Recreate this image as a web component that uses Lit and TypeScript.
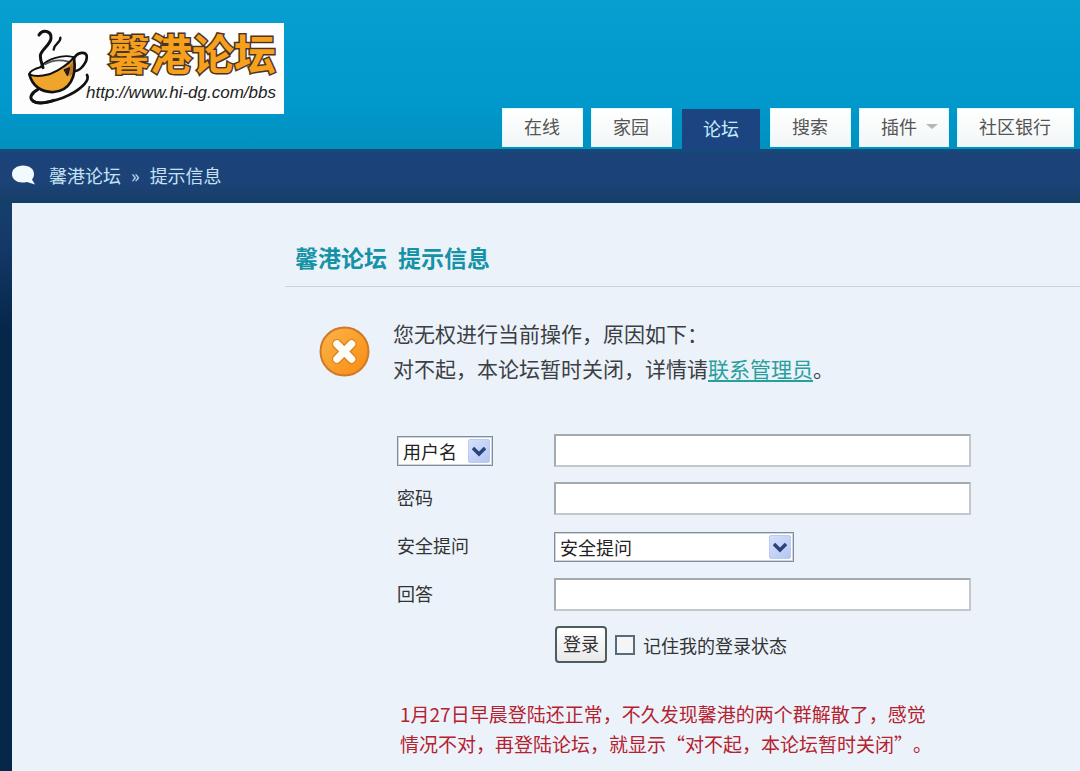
import { LitElement, html, css, svg } from "lit";
import { customElement, property } from "lit/decorators.js";

const chevron = svg`<path d="M1 2.500 L7 8.500 L13 2.500" fill="none" stroke="#2d4378" stroke-width="3.400"/>`;

@customElement("site-header")
class SiteHeader extends LitElement {
  static styles = css`
    :host { display: block; }
    .head {
      display: flex; justify-content: space-between; align-items: flex-end;
      min-height: 126px; padding: 23px 6px 0 12px;
      background: linear-gradient(#069fd0, #0198cb 70%, #0190bf);
    }
    .logo {
      align-self: flex-start; display: flex; justify-content: space-between; align-items: flex-start;
      box-sizing: border-box; width: 272px; height: 91px; background: #fdfdfd;
      text-decoration: none; color: #222; padding: 4px 8px 0 15px;
    }
    .cup { flex: none; width: 62px; height: 80px; }
    .words { display: flex; flex-direction: column; align-items: flex-end; margin-left: -6px; white-space: nowrap; }
    .name {
      font: 700 42px/50px "Noto Sans CJK SC", sans-serif; color: #f6a01c;
      -webkit-text-stroke: 3px #4a3524; paint-order: stroke fill;
    }
    .url { font: italic 17px/32px "Liberation Sans", sans-serif; }
    .tabs { display: flex; gap: 8px; align-items: flex-end; padding-bottom: 2px; }
    .tab {
      display: flex; align-items: center; gap: 9px; box-sizing: border-box;
      height: 39px; padding: 0 22px 3px 21px; font-size: 18px; line-height: 24px; white-space: nowrap;
      color: #555; text-decoration: none; background: linear-gradient(#fff, #f2f6f7);
      border: 1px solid #d8fbff;
    }
    .menu { padding-right: 10px; }
    .caret { width: 12px; height: 5px; }
    .current {
      margin: 0 2px -2px; height: 40px; padding: 0 20px 3px;
      color: #cdebff; background: #1b4480; border-color: #1b4480;
    }
    .crumbs {
      display: flex; align-items: center; gap: 13px; box-sizing: border-box; height: 54px; padding: 0 0 3px 12px;
      font-size: 18px; color: #c5e2f5; background: linear-gradient(#0f4e78, #1c4379 8%, #1c4278 60%, #163f66);
    }
    .crumbs a { color: inherit; text-decoration: none; }
    .bubble { width: 24px; height: 20px; }
    .trail { display: flex; gap: 10px; }
  `;
  render() {
    return html`
      <header class="head">
        <a class="logo" href="#">
          <svg class="cup" viewBox="50 20 186 240" aria-hidden="true">
            <g fill="none" stroke="#111" stroke-linecap="round" stroke-linejoin="round">
              <path d="M57 162 C66 196 92 216 130 216 C176 212 202 176 190 110 C176 132 140 160 100 166 C80 168 64 168 57 162Z" fill="#efa42c" stroke="none"/>
              <path d="M192 112 C188 128 176 138 162 148 L180 168 C190 156 196 130 192 112Z" fill="#b9772a" stroke="none"/>
              <path d="M56 160 C72 130 140 98 190 110 C180 132 142 160 100 165 C80 168 62 168 56 160Z" fill="#fdfdfd" stroke="none"/>
              <path d="M92 138 C112 116 156 102 188 110" stroke-width="5"/>
              <path d="M104 132 C128 118 152 118 174 124" stroke="#555" stroke-width="5"/>
              <path d="M92 140 C70 146 58 152 57 162 C80 172 116 166 142 150 C166 136 184 124 190 110" stroke-width="6"/>
              <path d="M57 162 C66 196 92 217 130 215 C178 211 200 170 191 112" stroke-width="8"/>
              <path d="M162 148 L178 142 L172 166Z" fill="#331b12" stroke-width="3"/>
              <path d="M192 112 C204 94 226 94 229 106 C232 124 212 150 196 152" stroke-width="8"/>
              <path d="M230 164 C240 182 206 214 158 232 C118 246 76 254 66 240" stroke-width="8"/>
              <path d="M82 208 C62 218 56 234 68 242 C80 252 106 248 130 240" stroke-width="9"/>
              <path d="M86 44 C96 26 124 30 122 54 C120 74 92 88 90 106 C90 120 94 128 98 142" stroke-width="9"/>
              <path d="M150 52 C152 68 132 68 130 88" stroke-width="7"/>
            </g>
          </svg>
          <span class="words">
            <span class="name">馨港论坛</span>
            <span class="url">http://www.hi-dg.com/bbs</span>
          </span>
        </a>
        <nav class="tabs">
          <a class="tab" href="#">在线</a>
          <a class="tab" href="#">家园</a>
          <a class="tab current" href="#" aria-current="page">论坛</a>
          <a class="tab" href="#">搜索</a>
          <a class="tab menu" href="#">插件
            <svg class="caret" viewBox="0 0 12 5" aria-hidden="true"><path d="M0 0H12L6 5Z" fill="#b3b7b9"/></svg>
          </a>
          <a class="tab" href="#">社区银行</a>
        </nav>
      </header>
      <div class="crumbs">
        <svg class="bubble" viewBox="0 0 24 20" aria-hidden="true">
          <path d="M11 0.500 C17.500 0.500 22 4 22 9 C22 11.500 21 13.500 20 14.500 L23 19.500 L15 17 C6 19 0 15 0 9 C0 4 5 0.500 11 0.500Z" fill="#f2faff"/>
        </svg>
        <div class="trail"><a href="#">馨港论坛</a><span>»</span><span>提示信息</span></div>
      </div>
    `;
  }
}

@customElement("drop-down")
class DropDown extends LitElement {
  @property() label = "";
  @property() name = "";
  @property({ attribute: false }) options: string[] = [];
  static styles = css`
    :host { display: inline-grid; align-items: center; }
    .box {
      grid-area: 1 / 1; appearance: none; box-sizing: border-box; width: 100%; height: 30px;
      margin: 0; padding: 0 30px 0 5px; border: 1px solid #7f8d98; outline: 1px solid #cfd6dd; outline-offset: -2px;
      border-radius: 0; background: #fff; color: #222;
      font: 18px/24px "Noto Sans CJK SC", sans-serif;
    }
    .arrow {
      grid-area: 1 / 1; justify-self: end; pointer-events: none; box-sizing: border-box;
      width: 22px; height: 24px; padding: 3px; margin-right: 3px; border-radius: 2px;
      border: 1px solid #bccbf2; background: linear-gradient(135deg, #d5e0fb, #b4c6f2);
    }
  `;
  render() {
    return html`
      <select class="box" name=${this.name} aria-label=${this.label}>
        ${this.options.map((o) => html`<option>${o}</option>`)}
      </select>
      <svg class="arrow" viewBox="0 0 14 11" aria-hidden="true">${chevron}</svg>
    `;
  }
}

@customElement("login-form")
class LoginForm extends LitElement {
  static styles = css`
    :host { display: block; }
    .form {
      display: grid; grid-template-columns: 157px minmax(0, 417px); row-gap: 15px;
      grid-auto-rows: minmax(33px, auto);
      align-items: center; font-size: 18px; line-height: 24px; color: #333;
    }
    .caption { padding-bottom: 4px; }
    .field {
      box-sizing: border-box; width: 100%; height: 33px; margin: 0; padding: 0 6px;
      border: 2px solid #c2c8cb; border-top-color: #a5abb0; border-left-color: #a5abb0;
      background: #fff; font: inherit; border-radius: 0;
    }
    .kind { width: 96px; }
    .question { width: 240px; }
    .actions { grid-column: 2; display: flex; align-items: center; gap: 8px; padding: 0 0 0 1px; }
    .submit {
      box-sizing: border-box; width: 52px; height: 37px; padding: 0 0 4px; margin: 0;
      border: 2px solid #4d5c5c; border-radius: 4px; background: linear-gradient(#fff, #e9e9ea);
      font: inherit; color: #333;
    }
    .remember { display: flex; align-items: center; gap: 8px; }
    .tick {
      appearance: none; box-sizing: border-box; width: 20px; height: 20px; margin: 0;
      border: 2px solid #5a6b78; background: #f3f5f6;
    }
    .tick:checked { background: #2d4378; }
  `;
  render() {
    return html`
      <form class="form" @submit=${(e: Event) => e.preventDefault()}>
        <drop-down class="kind" label="登录方式" name="kind" .options=${["用户名", "UID"]}></drop-down>
        <input class="field" name="user" aria-label="用户名" />
        <label class="caption" for="password">密码</label>
        <input class="field" id="password" type="password" />
        <span class="caption">安全提问</span>
        <drop-down class="question" label="安全提问" name="question" .options=${["安全提问"]}></drop-down>
        <label class="caption" for="answer">回答</label>
        <input class="field" id="answer" />
        <div class="actions">
          <button class="submit" type="submit">登录</button>
          <label class="remember"><input class="tick" type="checkbox" />记住我的登录状态</label>
        </div>
      </form>
    `;
  }
}

@customElement("app-root")
class AppRoot extends LitElement {
  static styles = css`
    :host {
      display: flex; flex-direction: column; min-height: 100vh;
      font-family: "Noto Sans CJK SC", sans-serif;
      background: linear-gradient(#163f6b 200px, #153a6a 240px, #06274a 330px);
    }
    .page { flex: 1; margin-left: 12px; padding-left: 273px; background: #ecf2fa; }
    .title {
      display: flex; gap: 11px; margin: 0; padding: 39px 10px 13px;
      font-size: 23px; line-height: 31px; color: #1592a6; border-bottom: 1px solid #c9d5da;
    }
    .notice { display: flex; align-items: center; gap: 23px; padding: 29px 35px 0 34px; }
    .icon { flex: none; width: 51px; height: 51px; }
    .reason { margin: 0; font-size: 21px; line-height: 35px; color: #3c3f43; }
    .contact { color: #27a09c; text-underline-offset: 3px; text-decoration-thickness: 2px; }
    .body { padding: 48px 24px 0 112px; }
    .remark {
      margin: 0; padding: 36px 0 12px 3px; font-size: 19px; line-height: 30px; color: #b5222f;
      text-spacing-trim: space-all; font-kerning: none;
    }
  `;
  render() {
    return html`
      <site-header></site-header>
      <main class="page">
        <h1 class="title"><span>馨港论坛</span><span>提示信息</span></h1>
        <section class="notice">
          <svg class="icon" viewBox="0 0 51 51" aria-hidden="true">
            <defs>
              <linearGradient id="g" x1="0" y1="0" x2="1" y2="1">
                <stop offset="0" stop-color="#fcb64a"/><stop offset="1" stop-color="#f98a10"/>
              </linearGradient>
            </defs>
            <circle cx="25.500" cy="25.500" r="24" fill="url(#g)" stroke="#cf7a28" stroke-width="2"/>
            <path d="M18 18 L32.500 33 M32.500 18 L18 33" stroke="#d98222" stroke-width="10" stroke-linecap="round"/>
            <path d="M18 18 L32.500 33 M32.500 18 L18 33" stroke="#fffdf5" stroke-width="7.500" stroke-linecap="round"/>
          </svg>
          <p class="reason">
            您无权进行当前操作，原因如下：<br />
            对不起，本论坛暂时关闭，详情请<a class="contact" href="#">联系管理员</a>。
          </p>
        </section>
        <div class="body">
          <login-form></login-form>
          <p class="remark">1月27日早晨登陆还正常，不久发现馨港的两个群解散了，感觉<br />情况不对，再登陆论坛，就显示“对不起，本论坛暂时关闭”。</p>
        </div>
      </main>
    `;
  }
}
